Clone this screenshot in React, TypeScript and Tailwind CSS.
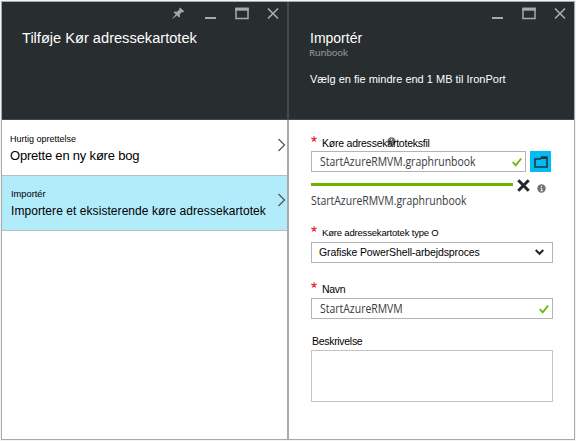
import type { ReactNode } from 'react';

const ARIAL = "font-['Liberation_Sans',Arial,sans-serif]";
const SEGOE = "font-['Open_Sans','Noto_Sans',sans-serif]";
const FILE_TEXT = `inline-block origin-left scale-x-[0.87] text-[12px] text-[#363b40] ${SEGOE}`;

function PinIcon() {
  return (
    <svg width="13" height="13" viewBox="0 0 13 13" fill="#a3a6a8" className="mr-[20px]">
      <path d="M8 .5 12.4 4.6 11 5.3 10 5.1 7.7 7.4 8 9.6 7.1 10.6 4.8 8.4 .8 11.8 .3 11.4 3.7 7.4 1.6 5.3 2.6 4.4 4.9 4.7 7.5 2.4 7.2 1.4Z" />
    </svg>
  );
}

function WindowButtons() {
  return (
    <svg width="75" height="13" viewBox="0 0 75 13" fill="none" stroke="#a8abac">
      <path d="M0 11H11" strokeWidth="2" />
      <path d="M31 1.5H43V11.5H31Z" strokeWidth="1.5" />
      <path d="M30.3 2.2H43.7" strokeWidth="3" />
      <path d="M63 1.5 73 11.5M73 1.5 63 11.5" strokeWidth="1.7" />
    </svg>
  );
}

function Chevron() {
  return (
    <svg width="9" height="14" viewBox="0 0 9 14" fill="none" stroke="#4a5257" strokeWidth="1.2">
      <path d="M1.5 1 7.5 7 1.5 13" />
    </svg>
  );
}

function Check() {
  return (
    <svg width="10" height="10" viewBox="0 0 10 10" fill="none" stroke="#6cb400" strokeWidth="1.8">
      <path d="M.8 5 3.7 8.3 9.2 1.5" />
    </svg>
  );
}

function Info() {
  return (
    <svg width="9" height="9" viewBox="0 0 9 9">
      <circle cx="4.5" cy="4.5" r="4.2" fill="#6f7274" />
      <path d="M4.5 1.8V3M3.6 4H4.8V7M3.5 6.8H5.8" stroke="#fff" strokeWidth="0.9" fill="none" />
    </svg>
  );
}

function Label({ children }: { children: ReactNode }) {
  return (
    <div className="flex h-[14px] items-start">
      <svg width="6" height="6" viewBox="0 0 6 6" stroke="#e8303c" strokeWidth="1.2" className="mr-[5px]">
        <path d="M3 .2V3L1.3 5.5M3 3 4.7 5.5M.3 2.1 3 3 5.7 2.1" fill="none" />
      </svg>
      {children}
    </div>
  );
}

export default function App() {
  return (
    <div className={`flex h-[441px] w-[576px] overflow-hidden bg-[#f4f4f4] pt-px pl-px whitespace-nowrap text-black ${ARIAL}`}>
      <div className="flex h-[439px] w-[574px] border border-[#a9a9a9] bg-white">
        <section className="flex w-[287px] flex-col border-r-2 border-[#a9a9a9]">
          <header className="-mr-[2px] h-[118px] border-r-2 border-b border-[#444b4e] bg-[#282d30]">
            <div className="flex pt-[5px] pl-[170px]">
              <PinIcon />
              <WindowButtons />
            </div>
            <h1 className="mt-[9px] pl-[20px] text-[14.67px] leading-[18px] tracking-[-0.02px] text-white">Tilføje Kør adressekartotek</h1>
          </header>
          <div className="flex h-[56px] border-b border-[#bdbdbd] pl-[8px]">
            <div className="w-[267px]">
              <p className="mt-[13px] text-[9px] leading-[12px]">Hurtig oprettelse</p>
              <p className="mt-[3px] text-[13px] leading-[16px] tracking-[-0.2px]">Oprette en ny køre bog</p>
            </div>
            <div className="pt-[18px]"><Chevron /></div>
          </div>
          <div className="flex h-[55px] border-b border-[#bdbdbd] bg-[#b2ebfa] pl-[9px]">
            <div className="w-[266px]">
              <p className="mt-[12px] text-[9.3px] leading-[12px]">Importér</p>
              <p className="mt-[3px] text-[12px] leading-[16px] tracking-[0.06px]">Importere et eksisterende køre adressekartotek</p>
            </div>
            <div className="pt-[17px]"><Chevron /></div>
          </div>
        </section>

        <section className="flex w-[285px] flex-col">
          <header className="h-[118px] border-b border-[#444b4e] bg-[#282d30] pl-[21px] text-white">
            <div className="flex pt-[5px] pl-[182px]"><WindowButtons /></div>
            <h1 className="mt-[9px] text-[14px] leading-[18px]">Importér</h1>
            <p className={`-ml-px text-[9.5px] leading-[12px] font-semibold tracking-[-0.3px] text-[#84888a] ${SEGOE}`}>Runbook</p>
            <p className="mt-[12px] text-[11px] leading-[16px]">Vælg en fie mindre end 1 MB til IronPort</p>
          </header>
          <div className="flex flex-col pt-[16px] pl-[22px]">
            <Label>
              <span className="relative text-[10.5px] leading-[14px] tracking-[-0.23px]">
                <span className="absolute top-[1px] left-[65px]"><Info /></span>
                <span className="relative">Køre adressekartoteksfil</span>
              </span>
            </Label>
            <div className="mt-px flex">
              <div className="flex h-[21px] w-[215px] items-center justify-between border border-[#b4b4b4] pr-[3px] pl-[8px]">
                <span className={FILE_TEXT}>StartAzureRMVM.graphrunbook</span>
                <Check />
              </div>
              <div className="ml-[4px] flex h-[21px] w-[21px] items-center justify-center bg-[#00bcf2]">
                <svg width="14" height="12" viewBox="0 0 14 12" fill="none" stroke="#24323a" strokeWidth="1.5">
                  <path d="M1 3H6L8 1H13V11H1Z" />
                  <path d="M7 2H13" strokeWidth="2" />
                </svg>
              </div>
            </div>
            <div className="mt-[7px] flex h-[14px] items-start">
              <div className="mt-[4px] h-[3px] w-[202px] bg-[#6cb400]" />
              <svg width="13" height="13" viewBox="0 0 13 13" stroke="#20282c" strokeWidth="3" className="ml-[4px]">
                <path d="M1.3 1.3 11.7 11.7M11.7 1.3 1.3 11.7" />
              </svg>
              <span className="mt-[5px] ml-[7px]"><Info /></span>
            </div>
            <p className="h-[14px] leading-[14px]"><span className={`${FILE_TEXT} leading-[14px]`}>StartAzureRMVM.graphrunbook</span></p>
            <div className="mt-[19px]">
              <Label><span className="text-[9.5px] leading-[14px] tracking-[-0.18px]">Køre adressekartotek type O</span></Label>
            </div>
            <div className="mt-[2px] flex h-[21px] w-[242px] items-center justify-between border border-[#b4b4b4] pr-[8px] pl-[7px]">
              <span className="text-[10.5px] tracking-[-0.12px]">Grafiske PowerShell-arbejdsproces</span>
              <svg width="9" height="7" viewBox="0 0 9 7" fill="none" stroke="#20242c" strokeWidth="2">
                <path d="M.7 1 4.5 4.8 8.3 1" />
              </svg>
            </div>
            <div className="mt-[19px]">
              <Label><span className="text-[10.5px] leading-[14px] tracking-[-0.3px]">Navn</span></Label>
            </div>
            <div className="mt-[2px] flex h-[21px] w-[242px] items-center justify-between border border-[#b4b4b4] pr-[3px] pl-[8px]">
              <span className={FILE_TEXT}>StartAzureRMVM</span>
              <Check />
            </div>
            <p className="mt-[15px] pl-px text-[10.5px] leading-[14px] tracking-[-0.3px]">Beskrivelse</p>
            <div className="mt-[2px] h-[52px] w-[242px] border border-[#c4c4c4]" />
          </div>
        </section>
      </div>
    </div>
  );
}
